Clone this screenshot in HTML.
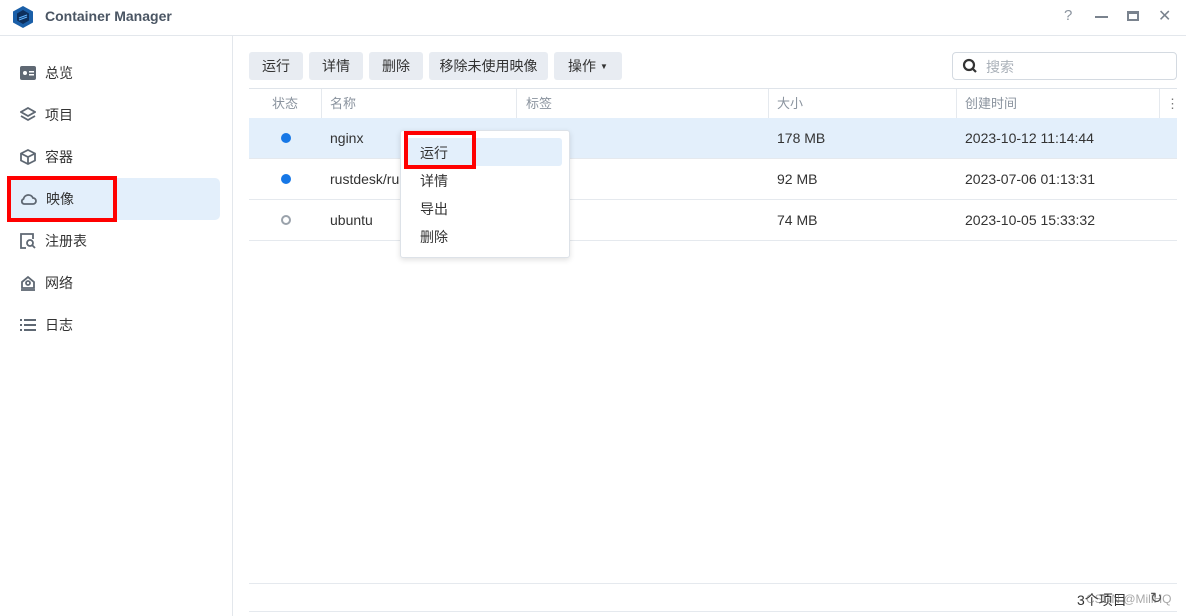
<!DOCTYPE html>
<html><head><meta charset="utf-8"><style>
*{box-sizing:border-box;margin:0;padding:0}
body{width:1186px;height:616px;background:#fff;font-family:"Liberation Sans","Noto Sans CJK SC",sans-serif;font-size:14px;color:#333;position:relative;overflow:hidden}
.abs{position:absolute}
.title{left:45px;top:8px;font-size:14px;font-weight:bold;color:#4a5563}
.hdrline{left:0;top:35px;width:1186px;height:1px;background:#e3e7ec}
.side{left:232px;top:36px;width:1px;height:580px;background:#e3e7ec}
.nav{left:20px;height:20px;font-size:14px;color:#333;display:flex;align-items:center}
.nav svg{margin-right:9px}
.btn{top:52px;height:28px;background:#e8ecf2;border-radius:3px;font-size:14px;color:#333;display:flex;align-items:center;justify-content:center}
.th{top:89px;height:29px;font-size:13px;color:#8a939e;line-height:29px}
.row{left:249px;width:928px;height:41px;border-bottom:1px solid #e5e9ee}
.cell{font-size:14px;color:#333}
.red{border:4px solid #f00}
</style></head><body>
<svg class="abs" style="left:12px;top:5px" width="22" height="24" viewBox="0 0 22 24"><polygon points="11,1 21,6.5 21,17.5 11,23 1,17.5 1,6.5" fill="#1a5fa8"/><polygon points="11,5 17,8.5 17,15.5 11,19 5,15.5 5,8.5" fill="#0d2f5c"/><path d="M7 13l8-3M7 15l8-3" stroke="#5fb3ff" stroke-width="1.2"/></svg>
<div class="abs title">Container Manager</div>
<div class="abs" style="left:1064px;top:7px;color:#8a939e;font-size:15px">?</div>
<div class="abs" style="left:1095px;top:16px;width:13px;height:2px;background:#7a838e"></div>
<div class="abs" style="left:1127px;top:11px;width:12px;height:10px;border:2px solid #7a838e;border-top-width:3px"></div>
<div class="abs" style="left:1158px;top:6px;color:#7a838e;font-size:16px">✕</div>
<div class="abs hdrline"></div>
<div class="abs side"></div>

<div class="abs" style="left:7px;top:178px;width:213px;height:42px;background:#e3effb;border-radius:5px"></div>
<div class="abs red" style="left:7px;top:176px;width:110px;height:46px"></div>

<div class="abs nav" style="top:63px"><svg width="16" height="14"><rect x="0" y="0" width="16" height="14" rx="2" fill="#5f6873"/><circle cx="5" cy="7" r="2" fill="#fff"/><rect x="9" y="5" width="5" height="1.5" fill="#fff"/><rect x="9" y="8" width="5" height="1.5" fill="#fff"/></svg>总览</div>
<div class="abs nav" style="top:105px"><svg width="16" height="16" fill="none" stroke="#5f6873" stroke-width="1.8"><path d="M8 1L15 5 8 9 1 5Z"/><path d="M1 9l7 4 7-4"/></svg>项目</div>
<div class="abs nav" style="top:147px"><svg width="16" height="16" fill="none" stroke="#5f6873" stroke-width="1.8"><path d="M8 1L15 4.5V11.5L8 15 1 11.5V4.5Z"/><path d="M1 4.5L8 8 15 4.5M8 8V15"/></svg>容器</div>
<div class="abs nav" style="top:189px"><svg width="17" height="14" fill="none" stroke="#5f6873" stroke-width="1.8"><path d="M4 12h9a3 3 0 0 0 0-6a5 5 0 0 0-9.5 1A2.6 2.6 0 0 0 4 12z"/></svg>映像</div>
<div class="abs nav" style="top:231px"><svg width="16" height="16" fill="none" stroke="#5f6873" stroke-width="1.8"><path d="M6 15H1V1h12v5"/><circle cx="10" cy="10" r="3"/><path d="M12 12l3 3"/></svg>注册表</div>
<div class="abs nav" style="top:273px"><svg width="16" height="16" fill="none" stroke="#5f6873" stroke-width="1.8"><path d="M2 7L8 2l6 5V13H2Z"/><circle cx="8" cy="8" r="2"/><path d="M1 15h14"/></svg>网络</div>
<div class="abs nav" style="top:315px"><svg width="16" height="14" fill="#5f6873"><rect x="0" y="1" width="2" height="2"/><rect x="4" y="1" width="12" height="2"/><rect x="0" y="6" width="2" height="2"/><rect x="4" y="6" width="12" height="2"/><rect x="0" y="11" width="2" height="2"/><rect x="4" y="11" width="12" height="2"/></svg>日志</div>

<div class="abs btn" style="left:249px;width:54px">运行</div>
<div class="abs btn" style="left:309px;width:54px">详情</div>
<div class="abs btn" style="left:369px;width:54px">删除</div>
<div class="abs btn" style="left:429px;width:119px">移除未使用映像</div>
<div class="abs btn" style="left:554px;width:68px">操作 <span style="font-size:8px;margin-left:4px">▼</span></div>
<div class="abs" style="left:952px;top:52px;width:225px;height:28px;border:1px solid #d4dae1;border-radius:4px"></div>
<svg class="abs" style="left:962px;top:58px" width="16" height="16" fill="none" stroke="#333" stroke-width="2.2"><circle cx="7" cy="7" r="5"/><path d="M10.5 10.5L14 14"/></svg>
<div class="abs" style="left:986px;top:57px;color:#aab1b9;font-size:14px">搜索</div>

<div class="abs" style="left:249px;top:88px;width:928px;height:1px;background:#dfe4ea"></div>
<div class="abs th" style="left:272px">状态</div>
<div class="abs" style="left:321px;top:89px;width:1px;height:29px;background:#e5e9ee"></div>
<div class="abs th" style="left:330px">名称</div>
<div class="abs" style="left:516px;top:89px;width:1px;height:29px;background:#e5e9ee"></div>
<div class="abs th" style="left:526px">标签</div>
<div class="abs" style="left:768px;top:89px;width:1px;height:29px;background:#e5e9ee"></div>
<div class="abs th" style="left:777px">大小</div>
<div class="abs" style="left:956px;top:89px;width:1px;height:29px;background:#e5e9ee"></div>
<div class="abs th" style="left:965px">创建时间</div>
<div class="abs" style="left:1159px;top:89px;width:1px;height:29px;background:#e5e9ee"></div>
<div class="abs th" style="left:1166px;color:#777">⋮</div>

<div class="abs row" style="top:118px;background:#e3effb"></div>
<div class="abs row" style="top:159px"></div>
<div class="abs row" style="top:200px"></div>
<div class="abs" style="left:281px;top:133px;width:10px;height:10px;border-radius:50%;background:#1677e6"></div>
<div class="abs" style="left:281px;top:174px;width:10px;height:10px;border-radius:50%;background:#1677e6"></div>
<div class="abs" style="left:281px;top:215px;width:10px;height:10px;border-radius:50%;border:2px solid #9aa2ab"></div>
<div class="abs cell" style="left:330px;top:130px">nginx</div>
<div class="abs cell" style="left:330px;top:171px">rustdesk/ru</div>
<div class="abs cell" style="left:330px;top:212px">ubuntu</div>
<div class="abs cell" style="left:777px;top:130px">178 MB</div>
<div class="abs cell" style="left:777px;top:171px">92 MB</div>
<div class="abs cell" style="left:777px;top:212px">74 MB</div>
<div class="abs cell" style="left:965px;top:130px">2023-10-12 11:14:44</div>
<div class="abs cell" style="left:965px;top:171px">2023-07-06 01:13:31</div>
<div class="abs cell" style="left:965px;top:212px">2023-10-05 15:33:32</div>

<div class="abs" style="left:400px;top:130px;width:170px;height:128px;background:#fff;border:1px solid #dde2e8;border-radius:3px;box-shadow:0 2px 6px rgba(0,0,0,.12)"></div>
<div class="abs" style="left:406px;top:138px;width:156px;height:28px;background:#e3effb;border-radius:3px"></div>
<div class="abs red" style="left:404px;top:131px;width:72px;height:38px"></div>
<div class="abs cell" style="left:420px;top:143px">运行</div>
<div class="abs cell" style="left:420px;top:171px">详情</div>
<div class="abs cell" style="left:420px;top:199px">导出</div>
<div class="abs cell" style="left:420px;top:227px">删除</div>

<div class="abs" style="left:249px;top:583px;width:928px;height:1px;background:#e5e9ee"></div>
<div class="abs" style="left:249px;top:611px;width:928px;height:1px;background:#e5e9ee"></div>
<div class="abs" style="left:1077px;top:590px;font-size:14px;color:#333">3个项目</div>
<div class="abs" style="left:1086px;top:592px;font-size:12px;color:rgba(110,110,110,.6)">CSDN @MillHQ</div>
<div class="abs" style="left:1150px;top:589px;font-size:15px;color:#555">↻</div>
</body></html>
